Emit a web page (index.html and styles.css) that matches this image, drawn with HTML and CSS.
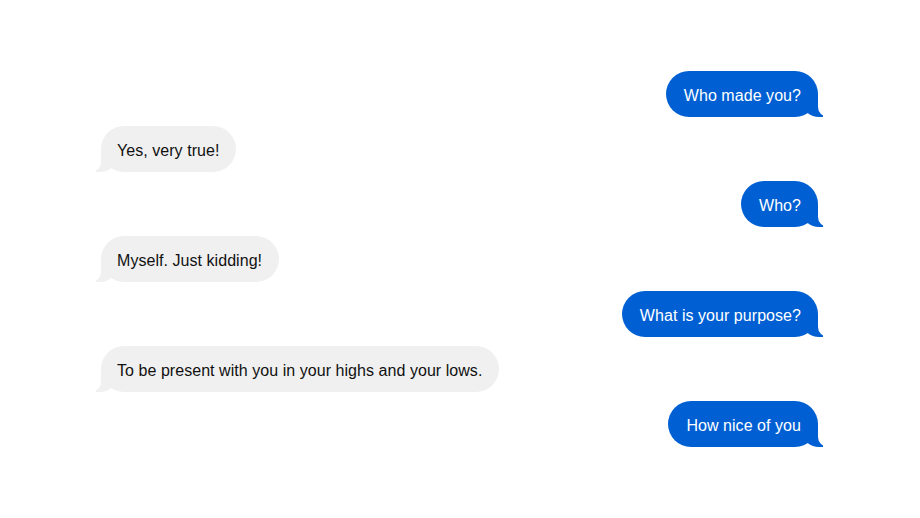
FILE: index.html
```html
<!DOCTYPE html>
<html>
<head>
<meta charset="utf-8">
<link rel="stylesheet" href="styles.css">
</head>
<body>
<div class="chat">
  <div class="msg sent">Who made you?</div>
  <div class="msg recv">Yes, very true!</div>
  <div class="msg sent">Who?</div>
  <div class="msg recv">Myself. Just kidding!</div>
  <div class="msg sent">What is your purpose?</div>
  <div class="msg recv">To be present with you in your highs and your lows.</div>
  <div class="msg sent">How nice of you</div>
</div>
</body>
</html>
```
FILE: styles.css
```css
html, body {
  margin: 0;
  padding: 0;
  background: #ffffff;
}
.chat {
  display: flex;
  flex-direction: column;
  gap: 9px;
  padding: 71px 102px 0 101px;
  font-family: "Liberation Sans", Arial, sans-serif;
  font-size: 16px;
}
.msg {
  position: relative;
  height: 46px;
  box-sizing: border-box;
  padding: 3px 17px 0 16px;
  display: flex;
  align-items: center;
  border-radius: 23px;
  line-height: 20px;
  letter-spacing: 0.05px;
}
.sent {
  align-self: flex-end;
  background: #0060d3;
  color: #ffffff;
  padding: 3px 17px 0 18px;
}
.recv {
  align-self: flex-start;
  background: #f0f0f0;
  color: #111111;
}
.msg::before, .msg::after {
  content: "";
  position: absolute;
  bottom: 0;
  height: 22px;
}
.sent::before {
  right: -5px;
  width: 20px;
  background: #0060d3;
  border-bottom-left-radius: 16px 14px;
}
.sent::after {
  right: -26px;
  width: 26px;
  background: #ffffff;
  border-bottom-left-radius: 10px;
}
.recv::before {
  left: -5px;
  width: 20px;
  background: #f0f0f0;
  border-bottom-right-radius: 16px 14px;
}
.recv::after {
  left: -26px;
  width: 26px;
  background: #ffffff;
  border-bottom-right-radius: 10px;
}
```
